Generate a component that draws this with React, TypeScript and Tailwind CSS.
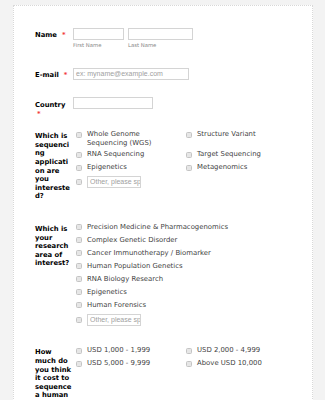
const labelFont = { fontFamily: '"DejaVu Sans", Verdana, sans-serif' };
const inputFont = { fontFamily: '"Liberation Sans", Arial, sans-serif' };

function Req() {
  return <span className="text-[#f23a3c] ml-[5px]">*</span>;
}

function Box() {
  return (
    <span className="mt-[1.5px] w-[6px] h-[6px] shrink-0 rounded-[1.5px] border border-[#c4c4c4] bg-[#e6e6e6]" />
  );
}

function Option({ text }: { text: string }) {
  return (
    <div className="flex items-start py-[2px] leading-[9px] text-[6.9px] text-[#3f3f3f]">
      <Box />
      <span className="ml-[5px]">{text}</span>
    </div>
  );
}

function Other() {
  return (
    <div className="flex items-start pt-[1.5px]">
      <span className="mt-[3px] w-[6px] h-[6px] shrink-0 rounded-[1.5px] border border-[#c4c4c4] bg-[#e6e6e6]" />
      <div
        className="ml-[5px] w-[54px] h-[12px] border border-[#d4d4d4] bg-white overflow-hidden whitespace-nowrap pl-[2px] text-[7px] leading-[10px] text-[#a0a0a0]"
        style={inputFont}
      >
        Other, please sp
      </div>
    </div>
  );
}

export default function App() {
  const seqCol1 = ['Whole Genome Sequencing (WGS)', 'RNA Sequencing', 'Epigenetics'];
  const seqCol2 = ['Structure Variant', 'Target Sequencing', 'Metagenomics'];
  const research = [
    'Precision Medicine & Pharmacogenomics',
    'Complex Genetic Disorder',
    'Cancer Immunotherapy / Biomarker',
    'Human Population Genetics',
    'RNA Biology Research',
    'Epigenetics',
    'Human Forensics',
  ];

  return (
    <div className="w-[325px] h-[400px] overflow-hidden bg-[#f3f3f3]" style={labelFont}>
      <div className="ml-[13px] mt-[5px] w-[300px] h-[420px] border border-dotted border-[#d8d8d8] bg-white">
        <div className="pl-[21px] pt-[22px]">
          {/* Name */}
          <div className="flex">
            <div className="w-[38px] shrink-0 pt-[3px] text-[6.8px] leading-[8.6px] font-bold text-black">
              Name
              <Req />
            </div>
            <div className="flex gap-[4px]">
              <div>
                <div className="w-[51px] h-[12px] border border-[#d4d4d4]" />
                <div className="mt-[1px] text-[5.3px] leading-[8px] text-[#888]">First Name</div>
              </div>
              <div>
                <div className="w-[65px] h-[12px] border border-[#d4d4d4]" />
                <div className="mt-[1px] text-[5.3px] leading-[8px] text-[#888]">Last Name</div>
              </div>
            </div>
          </div>

          {/* E-mail */}
          <div className="flex mt-[19px]">
            <div className="w-[38px] shrink-0 pt-[3px] text-[6.8px] leading-[8.6px] font-bold text-black">
              E-mail
              <Req />
            </div>
            <div
              className="w-[116px] h-[12px] border border-[#d4d4d4] pl-[2px] text-[7px] leading-[10px] text-[#a0a0a0] whitespace-nowrap overflow-hidden"
              style={inputFont}
            >
              ex: myname@example.com
            </div>
          </div>

          {/* Country */}
          <div className="flex mt-[17px]">
            <div className="w-[38px] shrink-0 pt-[4px] pr-[3px] text-[6.8px] leading-[8.6px] font-bold text-black">
              Country
              <br />
              <span className="text-[#f23a3c] ml-[2px]">*</span>
            </div>
            <div className="w-[80px] h-[12px] border border-[#d4d4d4]" />
          </div>

          {/* Sequencing */}
          <div className="flex items-start mt-[10px]">
            <div className="w-[38px] shrink-0 pt-[4px] pr-[1px] text-[6.8px] leading-[8.6px] font-bold text-black break-words">
              Which is sequencing application are you interested?
            </div>
            <div className="pl-[3px] grid grid-cols-[110px_110px] content-start">
              <div className="w-[95px] -mb-[2px]">
                <Option text={seqCol1[0]} />
              </div>
              <Option text={seqCol2[0]} />
              <Option text={seqCol1[1]} />
              <Option text={seqCol2[1]} />
              <Option text={seqCol1[2]} />
              <Option text={seqCol2[2]} />
              <Other />
            </div>
          </div>

          {/* Research */}
          <div className="flex items-start mt-[20px]">
            <div className="w-[38px] shrink-0 pt-[4px] pr-[1px] text-[6.8px] leading-[8.6px] font-bold text-black break-words">
              Which is your research area of interest?
            </div>
            <div className="pl-[3px] flex flex-col">
              {research.map((r) => (
                <Option key={r} text={r} />
              ))}
              <div className="pt-[1px]">
                <Other />
              </div>
            </div>
          </div>

          {/* Cost */}
          <div className="flex items-start mt-[18px]">
            <div className="w-[38px] shrink-0 pt-[4px] pr-[1px] text-[6.8px] leading-[8.6px] font-bold text-black break-words">
              How much do you think it cost to sequence a human genome?
            </div>
            <div className="pl-[3px] grid grid-cols-[110px_110px] content-start">
              <Option text="USD 1,000 - 1,999" />
              <Option text="USD 2,000 - 4,999" />
              <Option text="USD 5,000 - 9,999" />
              <Option text="Above USD 10,000" />
            </div>
          </div>
        </div>
      </div>
    </div>
  );
}
